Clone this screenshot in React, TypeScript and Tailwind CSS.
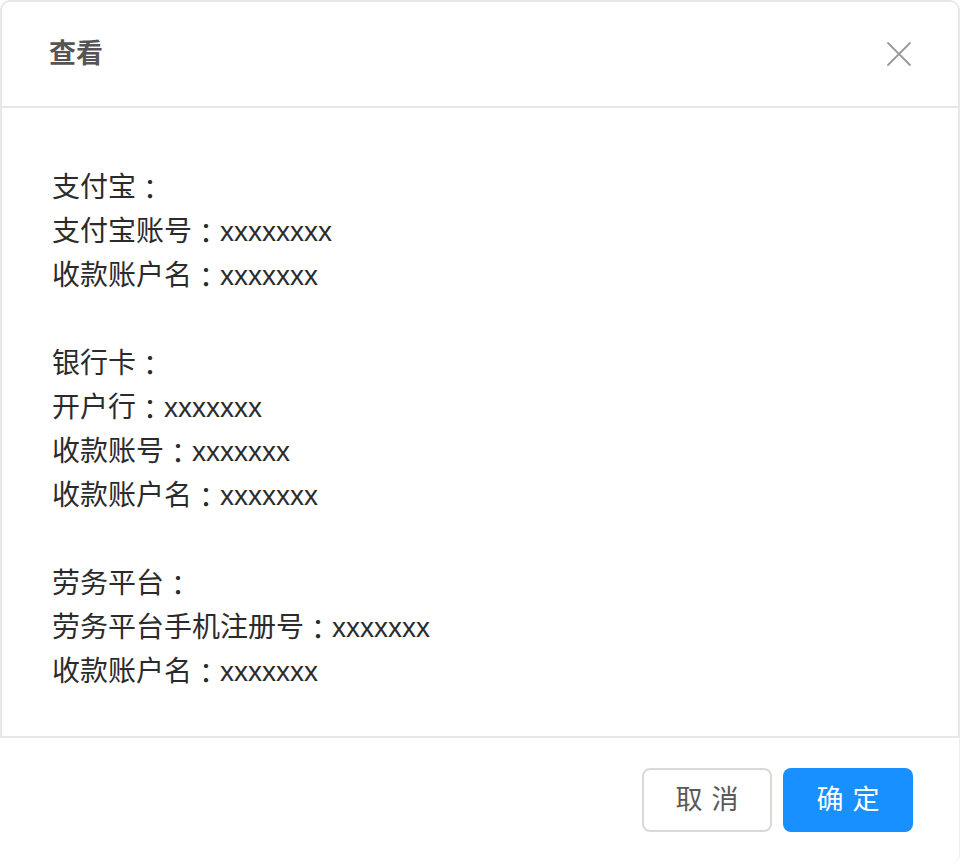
import React from "react";

const font = { fontFamily: '"Liberation Sans", "Noto Sans CJK SC", sans-serif' };
const colonFont = { fontFamily: '"Noto Sans CJK TC", "Noto Sans CJK SC", sans-serif' };

const groups: string[][] = [
  ["支付宝：", "支付宝账号：xxxxxxxx", "收款账户名：xxxxxxx"],
  ["银行卡：", "开户行：xxxxxxx", "收款账号：xxxxxxx", "收款账户名：xxxxxxx"],
  ["劳务平台：", "劳务平台手机注册号：xxxxxxx", "收款账户名：xxxxxxx"],
];

function Line({ text }: { text: string }) {
  const idx = text.indexOf("：");
  const head = text.slice(0, idx);
  const tail = text.slice(idx + 1);
  return (
    <div className="flex">
      <span>{head}</span>
      <span className="w-[28px] text-center" style={colonFont}>：</span>
      <span>{tail}</span>
    </div>
  );
}

export default function App() {
  return (
    <div className="w-[960px] h-[864px] bg-white flex flex-col" style={font}>
      <div className="h-[108px] flex items-center justify-between border-2 border-[#e8e8e8] rounded-t-[10px] pl-[47px] pr-[46px]">
        <div className="text-[27px] font-bold text-[#555] leading-none">查看</div>
        <svg width="26" height="26" viewBox="0 0 26 26" fill="none" stroke="#999" strokeWidth="1.8" strokeLinecap="round">
          <path d="M2 2 L24 24 M24 2 L2 24" />
        </svg>
      </div>
      <div className="h-[630px] border-x-2 border-b-2 border-[#e8e8e8] pl-[50px] pt-[58px] text-[28px] leading-[44px] text-[#2b2b2b]">
        {groups.map((g, i) => (
          <div key={i} className={i > 0 ? "mt-[44px]" : ""}>
            {g.map((l, j) => (
              <Line key={j} text={l} />
            ))}
          </div>
        ))}
      </div>
      <div className="flex-1 flex items-start justify-end gap-[11px] pt-[30px] pr-[46px] border-r border-[#eee] rounded-br-[10px]">
        <button className="w-[130px] h-[64px] rounded-[8px] border-2 border-[#d9d9d9] bg-white text-[#595959] text-[27px] tracking-[9px] pl-[9px] leading-none">
          取消
        </button>
        <button className="w-[130px] h-[64px] rounded-[8px] bg-[#1890ff] text-white text-[27px] tracking-[9px] pl-[9px] leading-none">
          确定
        </button>
      </div>
    </div>
  );
}
